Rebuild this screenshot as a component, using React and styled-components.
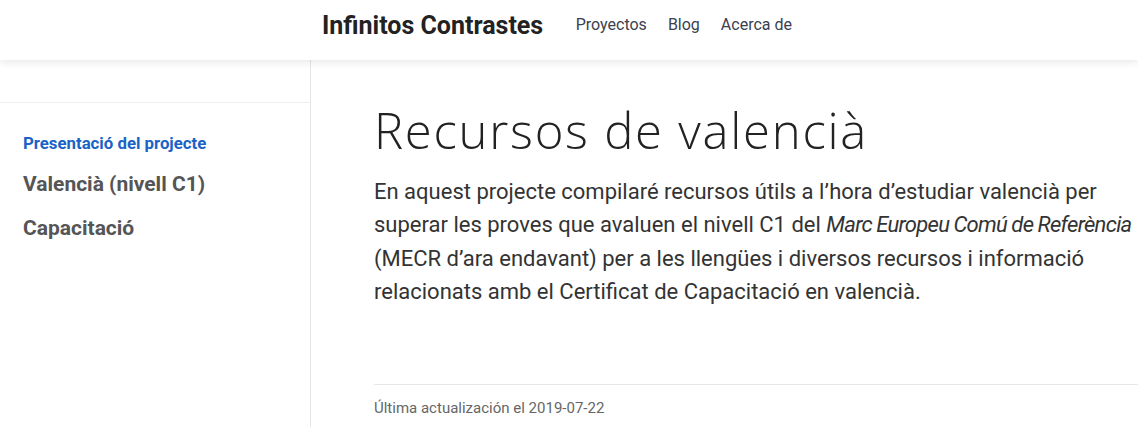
import React from "react";
import styled, { createGlobalStyle } from "styled-components";

const Global = createGlobalStyle`
  html, body { margin: 0; padding: 0; background: #fff; overflow: hidden; }
  body { font-family: Roboto, "Liberation Sans", sans-serif; color: #333; }
  * { box-sizing: border-box; }
`;

const Page = styled.div`
  display: flex;
  flex-direction: column;
  min-height: 100vh;
`;

const Header = styled.header`
  height: 60px;
  background: #fff;
  box-shadow: 0 2px 8px rgba(0, 0, 0, 0.1);
  display: flex;
  align-items: center;
  padding-left: 322px;
  position: relative;
  z-index: 2;
`;

const Brand = styled.a`
  font-family: Roboto, sans-serif;
  font-weight: 700;
  font-size: 25px;
  color: #222;
  text-decoration: none;
  margin-right: 22px;
  margin-top: -10px;
`;

const Nav = styled.nav`
  display: flex;
  margin-top: -12px;
`;

const NavLink = styled.a`
  font-size: 16px;
  color: #3a4150;
  text-decoration: none;
  padding: 0 10.5px;
`;

const Body = styled.div`
  display: flex;
  flex: 1;
`;

const Sidebar = styled.aside`
  width: 311px;
  flex-shrink: 0;
  border-right: 1px solid #e6e6e6;
  min-height: calc(100vh - 60px);
`;

const SideTop = styled.div`
  height: 43px;
  border-bottom: 1px solid #eeeeee;
`;

const SideList = styled.ul`
  list-style: none;
  margin: 0;
  padding: 28px 0 0 23px;
`;

const SideItem = styled.li`
  font-weight: 700;
  font-size: ${(p) => (p.$small ? "16.8px" : "21px")};
  color: ${(p) => (p.$active ? "#1a63c6" : "#555")};
  line-height: ${(p) => (p.$small ? "24px" : "28px")};
  margin-bottom: ${(p) => (p.$small ? "15px" : "16px")};
`;

const Main = styled.main`
  flex: 1;
  padding: 40px 0 0 63px;
  min-width: 0;
  overflow: hidden;
`;

const Title = styled.h1`
  font-family: "Open Sans", sans-serif;
  font-weight: 300;
  font-size: 49px;
  line-height: 60px;
  color: #222;
  margin: 0 0 15px 0;
  letter-spacing: 1.75px;
  white-space: nowrap;
`;

const Para = styled.p`
  font-size: 22px;
  line-height: 33.3px;
  color: #333;
  margin: 0;
  width: 795px;
`;

const Emph = styled.em`
  letter-spacing: -0.7px;
  word-spacing: -0.5px;
`;

const Footer = styled.footer`
  margin-top: 76px;
  border-top: 1px solid #e6e6e6;
  padding-top: 14px;
  font-size: 15px;
  color: #666;
`;

export default function App() {
  return (
    <>
      <Global />
      <Page>
        <Header>
          <Brand href="#">Infinitos Contrastes</Brand>
          <Nav>
            <NavLink href="#">Proyectos</NavLink>
            <NavLink href="#">Blog</NavLink>
            <NavLink href="#">Acerca de</NavLink>
          </Nav>
        </Header>
        <Body>
          <Sidebar>
            <SideTop />
            <SideList>
              <SideItem $small $active>Presentació del projecte</SideItem>
              <SideItem>Valencià (nivell C1)</SideItem>
              <SideItem>Capacitació</SideItem>
            </SideList>
          </Sidebar>
          <Main>
            <Title>Recursos de valencià</Title>
            <Para>
              En aquest projecte compilaré recursos útils a l’hora d’estudiar valencià per
              superar les proves que avaluen el nivell C1 del <Emph>Marc Europeu Comú de Referència</Emph>{" "}
              (MECR d’ara endavant) per a les llengües i diversos recursos i informació
              relacionats amb el Certificat de Capacitació en valencià.
            </Para>
            <Footer>Última actualización el 2019-07-22</Footer>
          </Main>
        </Body>
      </Page>
    </>
  );
}
